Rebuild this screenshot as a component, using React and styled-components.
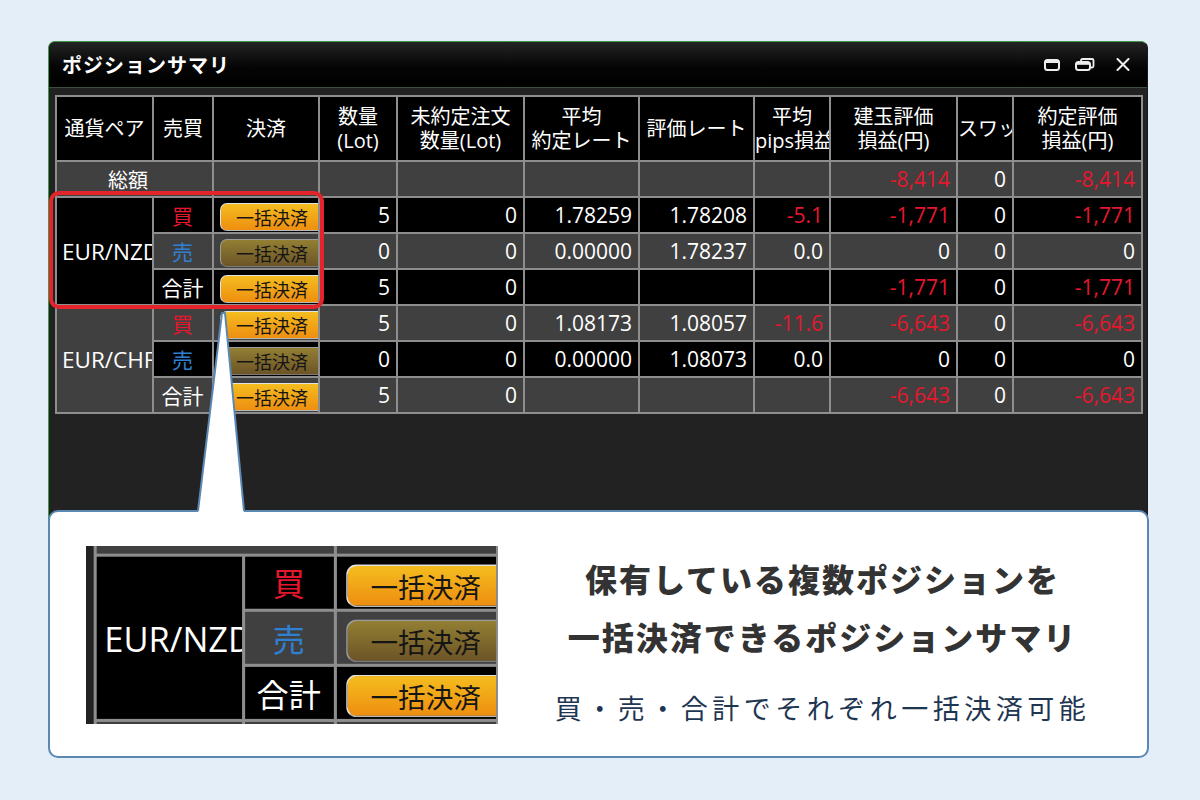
import React from "react";
import styled, { createGlobalStyle } from "styled-components";

const GlobalStyle = createGlobalStyle`
  html, body { margin: 0; padding: 0; }
  body {
    background: #e3eef8;
    font-family: "Open Sans", "Noto Sans CJK JP", sans-serif;
  }
`;

const Page = styled.div`
  position: relative;
  width: 1200px;
  height: 800px;
  box-sizing: border-box;
  padding: 41px 0 0 48px;
  overflow: hidden;
`;

const Window = styled.div`
  width: 1100px;
  height: 489px;
  box-sizing: border-box;
  background: #222;
  border: 1px solid #3f9a47;
  border-right-color: #1a1a1a;
  border-bottom: none;
  border-radius: 7px 7px 0 0;
  overflow: hidden;
`;

const TitleBar = styled.div`
  height: 45px;
  display: flex;
  align-items: center;
  justify-content: space-between;
  padding: 0 17px 0 13px;
  background: linear-gradient(#242424, #050505 55%, #000);
  border-bottom: 1px solid #3b4d3e;
`;

const Title = styled.div`
  font-family: "Noto Sans CJK JP", sans-serif;
  font-weight: 700;
  font-size: 20px;
  letter-spacing: 1px;
  color: #fff;
`;

const Controls = styled.div`
  display: flex;
  align-items: center;
  gap: 15px;
`;

const Body = styled.div`
  padding: 7px 0 0 6px;
`;

const Grid = styled.div`
  display: grid;
  grid-template-columns: ${(p) => p.$cols};
  grid-template-rows: ${(p) => p.$rows};
  gap: 2px;
  padding: 2px;
  background: #8e8e8e;
  width: max-content;
  margin-top: ${(p) => p.$shift || 0}px;
`;

const Cell = styled.div`
  background: ${(p) => (p.$gray ? "#404040" : "#000")};
  color: ${(p) =>
    p.$tone === "red" ? "#e5172d" : p.$tone === "blue" ? "#2f80d2" : "#fff"};
  font-size: 21px;
  display: flex;
  align-items: center;
  justify-content: ${(p) =>
    p.$align === "left"
      ? "flex-start"
      : p.$align === "center"
      ? "center"
      : "flex-end"};
  padding: 0 6px 0 5px;
  overflow: hidden;
  white-space: nowrap;
  grid-row: ${(p) => (p.$rowSpan ? `span ${p.$rowSpan}` : "auto")};
  grid-column: ${(p) => (p.$colSpan ? `span ${p.$colSpan}` : "auto")};
`;

const PairCell = styled(Cell)`
  font-size: 22.5px;
  padding-right: 0;
`;

const HeadCell = styled.div`
  background: #000;
  color: #fff;
  font-size: 20px;
  line-height: 24px;
  display: flex;
  align-items: center;
  overflow: hidden;
  white-space: nowrap;
`;

const HeadText = styled.div`
  width: 100%;
  text-align: center;
`;

const TotalLabel = styled(Cell)`
  font-size: 20px;
  padding-right: 18px;
`;

const ButtonCell = styled(Cell)`
  padding: 3px 0 0 6px;
  justify-content: flex-start;
`;

const SettleButton = styled.div`
  flex: none;
  width: 106px;
  height: 28px;
  box-sizing: border-box;
  border-radius: 7px;
  border: 1.5px solid ${(p) => (p.$muted ? "#9c9c9c" : "#e2e2e2")};
  border-bottom-color: ${(p) => (p.$muted ? "#7a7a7a" : "#b8b8b8")};
  background: ${(p) =>
    p.$muted
      ? "linear-gradient(#927f33, #6c5427)"
      : "linear-gradient(#f4bd1f, #ee8e10)"};
  color: #151515;
  font-family: "Noto Sans CJK JP", sans-serif;
  font-size: 18px;
  display: flex;
  align-items: center;
  justify-content: center;
  padding-right: 2px;
`;

const Highlight = styled.div`
  position: absolute;
  left: 49px;
  top: 191px;
  width: 275px;
  height: 118px;
  box-sizing: border-box;
  border: 4px solid #e3242b;
  border-radius: 10px;
  z-index: 2;
`;

const Pointer = styled.svg`
  position: absolute;
  left: 190px;
  top: 305px;
  z-index: 3;
`;

const Callout = styled.div`
  position: relative;
  z-index: 1;
  width: 1101px;
  height: 248px;
  margin-top: -20px;
  box-sizing: border-box;
  background: #fff;
  border: 2px solid #5a88b2;
  border-radius: 10px;
  display: flex;
`;

const Inset = styled.div`
  flex: none;
  width: 412px;
  height: 178px;
  margin: 34px 0 0 36px;
  overflow: hidden;
  background: #222;
`;

const InsetZoom = styled.div`
  display: flow-root;
  width: 269px;
  padding-left: 5px;
  transform: scale(1.53);
  transform-origin: 0 0;
`;

const Message = styled.div`
  flex: 1;
  display: flex;
  flex-direction: column;
  align-items: center;
  padding-top: 37px;
`;

const Headline = styled.h2`
  margin: 0;
  font-family: "Noto Sans CJK JP", sans-serif;
  font-weight: 900;
  font-size: 32px;
  line-height: 58px;
  letter-spacing: 2px;
  color: #333;
  text-align: center;
`;

const Subline = styled.p`
  margin: 25px 0 0;
  font-family: "Noto Sans CJK JP", sans-serif;
  font-weight: 400;
  font-size: 27px;
  line-height: 36px;
  letter-spacing: 4.5px;
  color: #1f3652;
`;

const COLS = "95px 58px 104px 76px 125px 113px 113px 74px 125px 54px 127px";

const headers = [
  ["通貨ペア"],
  ["売買"],
  ["決済"],
  ["数量", "(Lot)"],
  ["未約定注文", "数量(Lot)"],
  ["平均", "約定レート"],
  ["評価レート"],
  ["平均", "pips損益"],
  ["建玉評価", "損益(円)"],
  ["スワップ"],
  ["約定評価", "損益(円)"],
];

const pairs = [
  {
    name: "EUR/NZD",
    gray: false,
    rows: [
      { side: "買", tone: "red", gray: false, vals: ["5", "0", "1.78259", "1.78208", "-5.1", "-1,771", "0", "-1,771"] },
      { side: "売", tone: "blue", gray: true, muted: true, vals: ["0", "0", "0.00000", "1.78237", "0.0", "0", "0", "0"] },
      { side: "合計", gray: false, vals: ["5", "0", "", "", "", "-1,771", "0", "-1,771"] },
    ],
  },
  {
    name: "EUR/CHF",
    gray: true,
    rows: [
      { side: "買", tone: "red", gray: true, vals: ["5", "0", "1.08173", "1.08057", "-11.6", "-6,643", "0", "-6,643"] },
      { side: "売", tone: "blue", gray: false, muted: true, vals: ["0", "0", "0.00000", "1.08073", "0.0", "0", "0", "0"] },
      { side: "合計", gray: true, vals: ["5", "0", "", "", "", "-6,643", "0", "-6,643"] },
    ],
  },
];

function toneOf(v) {
  return v.startsWith("-") ? "red" : undefined;
}

function PairRows({ pair, withValues = true, rowLimit }) {
  const rows = rowLimit ? pair.rows.slice(0, rowLimit) : pair.rows;
  return (
    <>
      <PairCell $gray={pair.gray} $align="left" $rowSpan={rows.length}>
        {pair.name}
      </PairCell>
      {rows.map((r) => (
        <React.Fragment key={r.side}>
          <Cell $gray={r.gray} $tone={r.tone} $align="center">
            {r.side}
          </Cell>
          <ButtonCell $gray={r.gray}>
            <SettleButton $muted={r.muted}>一括決済</SettleButton>
          </ButtonCell>
          {withValues &&
            r.vals.map((v, i) => (
              <Cell key={i} $gray={r.gray} $tone={toneOf(v)}>
                {v}
              </Cell>
            ))}
        </React.Fragment>
      ))}
    </>
  );
}

function TotalRow({ withValues = true }) {
  return (
    <>
      <TotalLabel $gray $align="center" $colSpan={2}>
        {withValues ? "総額" : ""}
      </TotalLabel>
      <Cell $gray />
      {withValues &&
        ["", "", "", "", "", "-8,414", "0", "-8,414"].map((v, i) => (
          <Cell key={i} $gray $tone={toneOf(v)}>
            {v}
          </Cell>
        ))}
    </>
  );
}

function PositionTable() {
  return (
    <Grid $cols={COLS} $rows="63px repeat(7, 34px)">
      {headers.map((h, i) => (
        <HeadCell key={i}>
          <HeadText>
            {h.map((line, j) => (
              <div key={j}>{line}</div>
            ))}
          </HeadText>
        </HeadCell>
      ))}
      <TotalRow />
      {pairs.map((p) => (
        <PairRows key={p.name} pair={p} />
      ))}
    </Grid>
  );
}

function ZoomSnippet() {
  return (
    <Inset>
      <InsetZoom>
        <Grid $cols="95px 58px 104px" $rows="repeat(5, 34px)" $shift={-31}>
          <TotalRow withValues={false} />
          <PairRows pair={pairs[0]} withValues={false} />
          <PairRows pair={pairs[1]} withValues={false} rowLimit={1} />
        </Grid>
      </InsetZoom>
    </Inset>
  );
}

function MaximizeIcon() {
  return (
    <svg width="16" height="12" viewBox="0 0 16 12">
      <rect x="1" y="1" width="14" height="10" rx="2.5" fill="none" stroke="#eee" strokeWidth="2" />
      <rect x="1.5" y="1" width="13" height="3" fill="#eee" />
    </svg>
  );
}

function RestoreIcon() {
  return (
    <svg width="20" height="13" viewBox="0 0 20 13">
      <path d="M6 3 V2.5 A1.5 1.5 0 0 1 7.5 1 H17 A1.5 1.5 0 0 1 18.5 2.5 V8 A1.5 1.5 0 0 1 17 9.5 H16" fill="none" stroke="#eee" strokeWidth="1.8" />
      <rect x="1" y="4" width="14" height="8" rx="2.5" fill="none" stroke="#eee" strokeWidth="2" />
      <rect x="1.5" y="4" width="13" height="2.8" fill="#eee" />
    </svg>
  );
}

function CloseIcon() {
  return (
    <svg width="14" height="13" viewBox="0 0 14 13" style={{ marginLeft: 6 }}>
      <path d="M1.5 1 L12.5 12 M12.5 1 L1.5 12" stroke="#eee" strokeWidth="2" strokeLinecap="round" />
    </svg>
  );
}

export default function App() {
  return (
    <Page>
      <GlobalStyle />
      <Window>
        <TitleBar>
          <Title>ポジションサマリ</Title>
          <Controls>
            <MaximizeIcon />
            <RestoreIcon />
            <CloseIcon />
          </Controls>
        </TitleBar>
        <Body>
          <PositionTable />
        </Body>
      </Window>
      <Highlight />
      <Pointer width="62" height="212" viewBox="0 0 62 212">
        <polygon points="8,208 32,8 35,8 54,208" fill="#fff" />
        <polyline points="8,206 32,8 35,8 54,206" fill="none" stroke="#5a88b2" strokeWidth="2" strokeLinejoin="round" />
      </Pointer>
      <Callout>
        <ZoomSnippet />
        <Message>
          <Headline>
            保有している複数ポジションを
            <br />
            一括決済できるポジションサマリ
          </Headline>
          <Subline>買・売・合計でそれぞれ一括決済可能</Subline>
        </Message>
      </Callout>
    </Page>
  );
}
